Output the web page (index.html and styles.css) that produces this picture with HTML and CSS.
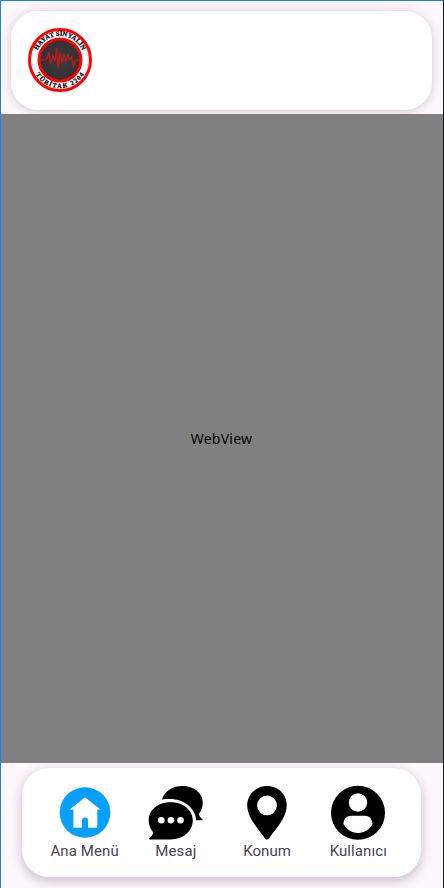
FILE: index.html
```html
<!DOCTYPE html>
<html lang="tr">
<head>
<meta charset="utf-8">
<title>Ana Menü</title>
<link rel="stylesheet" href="styles.css">
</head>
<body>
<div class="screen">
  <header class="top">
    <div class="card top-card">
      <svg class="logo" viewBox="0 0 66 66">
        <defs>
          <path id="arcTop" d="M8.700 33a24.300 24.300 0 0 1 48.600 0"/>
          <path id="arcBottom" d="M4.900 33a28.100 28.100 0 0 0 56.200 0"/>
          <radialGradient id="disc"><stop offset="0" stop-color="#3c3c3c"/><stop offset=".8" stop-color="#343436"/><stop offset="1" stop-color="#2c3032"/></radialGradient>
        </defs>
        <circle cx="33" cy="33" r="30.500" fill="#fff" stroke="#fc0404" stroke-width="3"/>
        <circle cx="33" cy="33" r="21" fill="url(#disc)" stroke="#fc0404" stroke-width="3"/>
        <path d="M13 33h6l1.500-3 1.500-5 1.500 12 2.500-8 2 5 1.500-13 1.500 20 2-16 2 12 2-9 2 6 2-6 1.500 5 2-3 2 10 2-7h5" fill="none" stroke="#dc1014" stroke-width="1.100"/>
        <text class="logo-text"><textPath href="#arcTop" startOffset="50%" text-anchor="middle" textLength="56">HAYAT SİNYALİN</textPath></text>
        <text class="logo-text"><textPath href="#arcBottom" startOffset="50%" text-anchor="middle" textLength="58">TÜBİTAK 2204</textPath></text>
      </svg>
    </div>
  </header>
  <main class="web">WebView</main>
  <footer class="bottom">
    <nav class="card nav">
      <div class="item">
        <svg class="icon" viewBox="0 0 56 56">
          <circle cx="28" cy="27.500" r="25.300" fill="#069fff"/>
          <path d="M28 12.300 43.500 24.600H40.300V42.700H31V35.500a3 3 0 0 0-6 0v7.200H16.400V24.600H12.700Z" fill="#fff"/>
        </svg>
        <span>Ana Menü</span>
      </div>
      <div class="item">
        <svg class="icon" viewBox="0 0 56 56">
          <path d="M14 14.500C17 5.500 25 1 34.500 1 46 1 54.800 8.200 54.800 17.500c0 4.500-1.500 8-3.800 11.300.2 2.800 1.500 4.300 3.600 5.200v1.300h-6.300C47.500 22.500 35 14 22 14c-3 0-5.500.1-8 .5Z"/>
          <path d="M22.500 17.200c12.500 0 22.300 7.600 22.300 18.100S35.500 54.500 22.500 54.500H1v-1.300c2.200-1.200 4-3 4.300-5.600C2.300 44 .7 40 .7 35.300.7 24.800 10 17.200 22.500 17.200Z"/>
          <g fill="#fff"><circle cx="13.300" cy="35.300" r="3.300"/><circle cx="22.900" cy="35.300" r="3.300"/><circle cx="32.500" cy="35.300" r="3.300"/></g>
        </svg>
        <span>Mesaj</span>
      </div>
      <div class="item">
        <svg class="icon" viewBox="0 0 56 56">
          <path fill-rule="evenodd" d="M28 1C16.800 1 8.200 9.500 8.200 20.300 8.200 33 20 44.500 25.500 52.800c1.600 2.400 3.400 2.400 5 0C36 44.500 47.800 33 47.800 20.300 47.800 9.500 39.200 1 28 1Zm0 9.500a9.900 9.900 0 1 1 0 19.800 9.900 9.900 0 0 1 0-19.800Z"/>
        </svg>
        <span>Konum</span>
      </div>
      <div class="item">
        <svg class="icon" viewBox="0 0 56 56">
          <circle cx="28" cy="27.800" r="27"/>
          <circle cx="28" cy="17.500" r="9.200" fill="#fff"/>
          <path d="M21.500 30.800h13c5 0 8 3.500 8 8.400C39.500 44 34.500 48 28 48s-11.500-4-14.500-8.800c0-4.900 3-8.400 8-8.400Z" fill="#fff"/>
        </svg>
        <span>Kullanıcı</span>
      </div>
    </nav>
  </footer>
</div>
</body>
</html>
```
FILE: styles.css
```css
* { box-sizing: border-box; }
body { margin: 0; font-family: Roboto, sans-serif; }
.screen {
  width: 444px;
  height: 888px;
  display: flex;
  flex-direction: column;
  overflow: hidden;
  background: #fef8fd;
  border-top: 1px solid #1484f8;
  border-left: 1px solid #1484f8;
  border-right: 1px solid #16161a;
}
.card {
  background: #fff;
  border-radius: 27px;
}
.top {
  height: 113px;
  padding: 10px 11px 4px 10px;
  overflow: hidden;
}
.top-card {
  height: 99px;
  padding: 16px;
  box-shadow: 0 2px 8px rgba(50, 30, 45, .1), 0 0 12px rgba(50, 30, 45, .12);
}
.logo { display: block; width: 66px; height: 66px; }
.logo-text {
  font-family: "Liberation Serif", serif;
  font-size: 6.5px;
  font-weight: bold;
  fill: #000;
  stroke: #000;
  stroke-width: .25px;
}
.web {
  flex: 1;
  display: flex;
  align-items: center;
  justify-content: center;
  padding: 0 1px 1px 0;
  background: #808080;
  color: #000;
  font-family: "Noto Sans", sans-serif;
  font-size: 14px;
  letter-spacing: .25px;
}
.bottom {
  height: 125px;
  padding: 5px 22px 11px 21px;
  overflow: hidden;
}
.nav {
  height: 109px;
  display: flex;
  padding: 17px 17px 0;
  box-shadow: 0 5px 12px rgba(50, 30, 45, .18), 0 1px 14px rgba(50, 30, 45, .1);
}
.item {
  flex: 1;
  display: flex;
  flex-direction: column;
  align-items: center;
  color: #49454f;
  font-size: 15px;
  line-height: 18px;
  letter-spacing: .1px;
  white-space: nowrap;
}
.icon { display: block; width: 56px; height: 56px; }
.item span { padding-top: 1px; }
```
